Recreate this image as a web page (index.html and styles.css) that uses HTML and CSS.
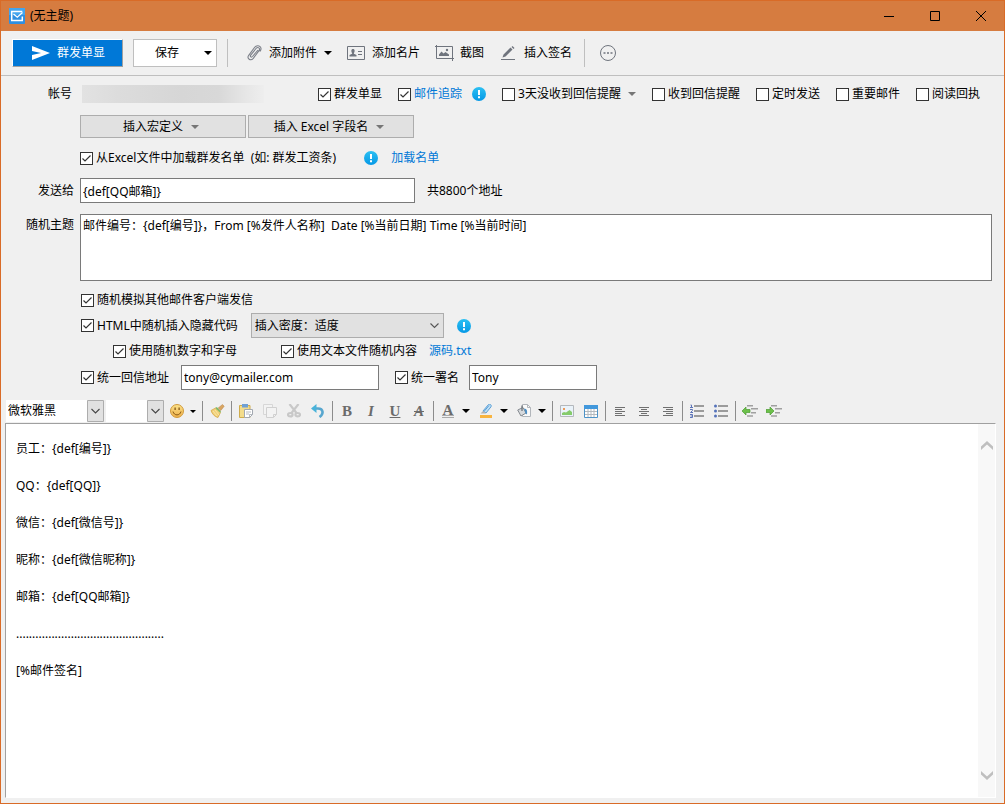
FILE: index.html
```html
<!DOCTYPE html>
<html lang="zh-CN">
<head>
<meta charset="utf-8">
<meta name="viewport" content="width=device-width, initial-scale=1">
<title>(无主题)</title>
<link rel="stylesheet" href="styles.css">
</head>
<body>
<svg class="defs" aria-hidden="true">
  <defs>
    <linearGradient id="info-fill" x1="0" y1="0" x2="0" y2="1"><stop offset="0" stop-color="#2cc0f2"/><stop offset="1" stop-color="#0598e6"/></linearGradient>
    <linearGradient id="smile-fill" x1="0" y1="0" x2="0" y2="1"><stop offset="0" stop-color="#fbe28a"/><stop offset="1" stop-color="#efb04a"/></linearGradient>
    <symbol id="info" viewBox="0 0 14 14"><circle cx="7" cy="7" r="7" fill="url(#info-fill)"/><path d="M6 3h2v5H6zM6 9.200h2v2H6z" fill="#fff"/></symbol>
    <symbol id="caret" viewBox="0 0 8 4"><path d="M0 0h8L4 4z" fill="currentColor"/></symbol>
  </defs>
</svg>
<div class="window">
  <header class="titlebar">
    <svg class="app-icon" width="16" height="16" viewBox="0 0 16 16"><rect width="16" height="16" rx="1" fill="#2f8fe0"/><rect y="0" width="16" height="7" fill="#43a5ee"/><path d="M13.300 8.500v4H2.700v-9h10.600" fill="none" stroke="#fff" stroke-width="1.500"/><path d="M4.500 6l3.800 3.200L13.500 4.500" fill="none" stroke="#fff" stroke-width="1.300"/></svg>
    <h1 class="title">(无主题)</h1>
    <button class="win-btn" aria-label="最小化"><svg width="10" height="10" viewBox="0 0 10 10"><path d="M0 5.500h10" stroke="#000"/></svg></button>
    <button class="win-btn" aria-label="最大化"><svg width="10" height="10" viewBox="0 0 10 10"><path d="M.5.500h9v9h-9z" fill="none" stroke="#000"/></svg></button>
    <button class="win-btn" aria-label="关闭"><svg width="10" height="10" viewBox="0 0 10 10"><path d="M0 0l10 10M10 0L0 10" stroke="#000"/></svg></button>
  </header>

  <nav class="toolbar">
    <button class="send"><svg width="18" height="14" viewBox="0 0 18 14"><path d="M0 0l18 7L0 14V9l9-2-9-2z" fill="#fff"/></svg>群发单显</button>
    <button class="save"><span class="save-text">保存</span><svg class="caret" width="8" height="4"><use href="#caret"/></svg></button>
    <span class="bar-sep"></span>
    <button class="tool attach"><svg width="16" height="18" viewBox="0 0 16 18"><path d="M12 6l-5.500 6.500c-1.200 1.300-2.800 0-1.800-1.400L10 4.500c2-2.200 4.600-.2 3 2.200L7.300 14.300c-2.700 3.200-6.800.3-4.600-3L8.500 3.500c2.500-3.200 7.500-1.500 6.300 2.300-.2.700-.5 1-1 1.700" fill="none" stroke="#7b7f88" stroke-width="1.100"/></svg>添加附件<svg class="caret" width="8" height="4"><use href="#caret"/></svg></button>
    <button class="tool card"><svg width="18" height="14" viewBox="0 0 18 14"><path d="M.5.500h17v13H.5z" fill="none" stroke="#6f747d"/><path d="M6 3c2 0 2 2.500.9 4v.8L9.500 9v1.500h-7V9l2.600-1.200V7C4 5.500 4 3 6 3zM11 5h4v1h-4zM11 8h4v1h-4z" fill="#6f747d"/></svg>添加名片</button>
    <button class="tool shot"><svg width="19" height="16" viewBox="0 0 19 16"><path d="M0 1.500h17.500V16M1.500 0v13.500H19" fill="none" stroke="#6f747d"/><path d="M4 11V9.500l2.500-3 2 2 2-1.500 3.500 2.500V11z" fill="#6f747d"/><circle cx="12" cy="5" r="1.200" fill="#6f747d"/></svg>截图</button>
    <button class="tool sign"><svg width="15" height="15" viewBox="0 0 15 15"><path d="M1.500 11.500l1-3 7-7 2 2-7 7zM10.500 1l1-1 2 2-1 1z" fill="#6f747d"/><path d="M0 13.500h14" stroke="#6f747d"/></svg>插入签名</button>
    <span class="bar-sep"></span>
    <button class="more" aria-label="更多"><svg width="16" height="16" viewBox="0 0 16 16"><circle cx="8" cy="8" r="7.500" fill="none" stroke="#6f747d"/><path d="M3.500 7.200h2v1.600h-2zM7 7.200h2v1.600H7zM10.500 7.200h2v1.600h-2z" fill="#6f747d"/></svg></button>
  </nav>

  <form class="form">
    <div class="row options">
      <span class="label account-label">帐号</span>
      <span class="account"></span>
      <label class="check"><input type="checkbox" checked>群发单显</label>
      <span class="pair"><label class="check blue"><input type="checkbox" checked>邮件追踪</label><svg width="14" height="14"><use href="#info"/></svg></span>
      <span class="remind"><label class="check"><input type="checkbox">3天没收到回信提醒</label><svg class="grey" width="8" height="4"><use href="#caret"/></svg></span>
      <label class="check"><input type="checkbox">收到回信提醒</label>
      <label class="check"><input type="checkbox">定时发送</label>
      <label class="check"><input type="checkbox">重要邮件</label>
      <label class="check"><input type="checkbox">阅读回执</label>
    </div>
    <div class="row macros">
      <span class="label"></span>
      <button type="button" class="grey-btn">插入宏定义<svg class="grey" width="8" height="4"><use href="#caret"/></svg></button>
      <button type="button" class="grey-btn">插入 Excel 字段名<svg class="grey" width="8" height="4"><use href="#caret"/></svg></button>
    </div>
    <div class="row excel">
      <span class="label"></span>
      <label class="check"><input type="checkbox" checked>从Excel文件中加载群发名单&nbsp; (如: 群发工资条)</label>
      <svg class="excel-info" width="14" height="14"><use href="#info"/></svg>
      <a href="#" class="link">加载名单</a>
    </div>
    <div class="row inputs">
      <label class="label" for="to">发送给</label>
      <input class="field to" id="to" type="text" value="{def[QQ邮箱]}">
      <span class="count">共8800个地址</span>
    </div>
    <div class="row subject">
      <label class="label" for="subject">随机主题</label>
      <textarea class="field area" id="subject">邮件编号：{def[编号]}，From [%发件人名称]&nbsp; Date [%当前日期] Time [%当前时间]</textarea>
    </div>
    <div class="row short inset">
      <span class="label"></span>
      <label class="check"><input type="checkbox" checked>随机模拟其他邮件客户端发信</label>
    </div>
    <div class="row density inset">
      <span class="label"></span>
      <label class="check"><input type="checkbox" checked>HTML中随机插入隐藏代码</label>
      <select class="density-select" aria-label="插入密度"><option>插入密度：适度</option></select>
      <svg width="14" height="14"><use href="#info"/></svg>
    </div>
    <div class="row short nested">
      <span class="label"></span>
      <label class="check first"><input type="checkbox" checked>使用随机数字和字母</label>
      <label class="check second"><input type="checkbox" checked>使用文本文件随机内容</label>
      <a href="#" class="link">源码.txt</a>
    </div>
    <div class="row inputs reply inset">
      <span class="label"></span>
      <label class="check"><input type="checkbox" checked>统一回信地址</label>
      <input class="field mail" type="text" value="tony@cymailer.com" aria-label="回信地址">
      <label class="check"><input type="checkbox" checked>统一署名</label>
      <input class="field name" type="text" value="Tony" aria-label="署名">
    </div>
  </form>

  <div class="format">
    <select class="font-select" aria-label="字体"><option>微软雅黑</option></select>
    <select class="font-select size" aria-label="字号"><option></option></select>
    <button class="ed smile" aria-label="表情"><svg width="14" height="14" viewBox="0 0 14 14"><circle cx="7" cy="7" r="6.500" fill="url(#smile-fill)" stroke="#d09a3c"/><path d="M3 7.500c1 4.500 7 4.500 8 0" fill="none" stroke="#8a5a14"/><path d="M4.500 3.500h1.200V6H4.500zM8.500 3.500h1.200V6H8.500z" fill="#7a4e10"/></svg></button>
    <button class="drop tight" aria-label="更多表情"><svg width="6" height="3"><use href="#caret"/></svg></button>
    <i class="sep"></i>
    <button class="ed" aria-label="格式刷"><svg width="15" height="14" viewBox="0 0 15 14"><path d="M1 6.500L5.500 4l5 4.500-2.500 5c-3-.5-6-3.500-7-7z" fill="#f0cf7a" stroke="#d2a33f" stroke-width=".7"/><path d="M3 7l4 5M5 6l4 5" stroke="#fff0b0" stroke-width=".7"/><path d="M5.300 4l1.500-1L11 7.200l-.8 1.500z" fill="#7dbb6a"/><path d="M8.200 4L12.500.5l1.700 1.700L10.800 6.500z" fill="#d9a662" stroke="#b98348" stroke-width=".5"/></svg></button>
    <i class="sep"></i>
    <button class="ed" aria-label="粘贴"><svg width="14" height="14" viewBox="0 0 14 14"><path d="M.5 1.500h10.500v12H.5z" fill="#f3dc8b" stroke="#cfac4c"/><path d="M3 0h6v3.500H3z" fill="#6f9fd4"/><path d="M5.500 5.500h8v5l-3 3h-5z" fill="#fff" stroke="#a2a8b0"/><path d="M7 8h5M7 10h3M10.500 13.500v-3h3" fill="none" stroke="#a2a8b0" stroke-width=".8"/></svg></button>
    <button class="ed" aria-label="复制"><svg width="14" height="14" viewBox="0 0 14 14"><path d="M.5.500h9v10h-9z" fill="#f3f3f3" stroke="#d7d7d7"/><path d="M3.500 3.500h10v7l-3 3h-7z" fill="#f3f3f3" stroke="#d0d0d0"/><path d="M10.500 13.500v-3h3" fill="none" stroke="#d0d0d0"/></svg></button>
    <button class="ed" aria-label="剪切"><svg width="14" height="14" viewBox="0 0 14 14" fill="none" stroke="#c8c8c8" stroke-width="2.200"><path d="M2.500 0l7 9M11.500 0l-7 9"/><ellipse cx="3.300" cy="10.700" rx="2.300" ry="1.700"/><ellipse cx="10.700" cy="10.700" rx="2.300" ry="1.700"/></svg></button>
    <button class="ed" aria-label="撤销"><svg width="14" height="14" viewBox="0 0 14 14"><path d="M3 4.500h4c5.500 0 6 5.500 1.500 8.500" fill="none" stroke="#58a7cf" stroke-width="2.600"/><path d="M0 4.500L5.500 0v9z" fill="#49b3da"/></svg></button>
    <i class="sep"></i>
    <button class="ed glyph" aria-label="粗体"><b>B</b></button>
    <button class="ed glyph" aria-label="斜体"><em>I</em></button>
    <button class="ed glyph" aria-label="下划线"><u>U</u></button>
    <button class="ed glyph" aria-label="删除线"><s><em>A</em></s></button>
    <i class="sep"></i>
    <button class="ed glyph color" aria-label="字体颜色"><span class="swatch">A</span></button>
    <button class="drop" aria-label="选择字体颜色"><svg width="8" height="4"><use href="#caret"/></svg></button>
    <button class="ed" aria-label="突出显示"><svg width="14" height="14" viewBox="0 0 14 14"><path d="M1 11h12v3H1z" fill="#f8b440"/><path d="M4 7l5.500-6.500c1.500-1 3.500.8 2.500 2.300L7 9z" fill="#bfe0f6" stroke="#5a9fd6"/><path d="M5 7.500l5-6" stroke="#5a9fd6"/><path d="M4 7L1.500 9.500H6L7 9z" fill="#b4b4b4"/></svg></button>
    <button class="drop" aria-label="选择突出显示"><svg width="8" height="4"><use href="#caret"/></svg></button>
    <button class="ed" aria-label="背景颜色"><svg width="14" height="14" viewBox="0 0 14 14"><path d="M5.500.5h5l3 3v9h-8z" fill="#fafafa" stroke="#b2b6bb"/><path d="M10.500.5v3h3" fill="none" stroke="#b2b6bb"/><path d="M.7 6L6 3.500 9 9l-5 3z" fill="#d7dadd" stroke="#84898f"/><path d="M5 7V1.500" stroke="#666d75" stroke-width="1.200"/><path d="M7 4.500c3 .3 3.500 2 3 6-1-1-2-1-2-3z" fill="#4d8fc4"/></svg></button>
    <button class="drop" aria-label="选择背景颜色"><svg width="8" height="4"><use href="#caret"/></svg></button>
    <i class="sep"></i>
    <button class="ed" aria-label="图片"><svg width="14" height="12" viewBox="0 0 14 12"><path d="M.5.500h13v11H.5z" fill="#eaf3fa" stroke="#b4b8bc"/><path d="M2 10V8l2-1 2 .5L9.500 5l2.500 2v3z" fill="#85cb6c"/><path d="M3 3h2v2H3z" fill="#ee9a5a"/></svg></button>
    <button class="ed" aria-label="表格"><svg width="14" height="13" viewBox="0 0 14 13"><path d="M.5.500h13v12H.5z" fill="#fff" stroke="#4d93c8"/><path d="M0 0h14v4H0z" fill="#4298dc"/><path d="M1 6.500h12M1 9.500h12M4 4v8M7 4v8M10 4v8" stroke="#b4b9be"/></svg></button>
    <i class="sep"></i>
    <button class="ed" aria-label="左对齐"><svg width="10" height="9" viewBox="0 0 10 9"><path d="M0 .5h10M0 2.500h7M0 4.500h10M0 6.500h7M0 8.500h10" stroke="#707070"/></svg></button>
    <button class="ed" aria-label="居中"><svg width="10" height="9" viewBox="0 0 10 9"><path d="M0 .5h10M2 2.500h6M0 4.500h10M2 6.500h6M0 8.500h10" stroke="#707070"/></svg></button>
    <button class="ed" aria-label="右对齐"><svg width="10" height="9" viewBox="0 0 10 9"><path d="M0 .5h10M3 2.500h7M0 4.500h10M3 6.500h7M0 8.500h10" stroke="#707070"/></svg></button>
    <i class="sep"></i>
    <button class="ed" aria-label="编号列表"><svg width="14" height="14" viewBox="0 0 14 14"><path d="M4 2h10M4 7h10M4 12h10" stroke="#9b9b9b" stroke-width="2"/><path d="M.5 1h1v3M0 3.500h3M0 5.500h2.500v1L.5 8.500H3M0 10.500h2.500v3H0M.5 12h2" fill="none" stroke="#5d74b8"/></svg></button>
    <button class="ed" aria-label="项目列表"><svg width="14" height="14" viewBox="0 0 14 14"><path d="M4 2h10M4 7h10M4 12h10" stroke="#9b9b9b" stroke-width="2"/><g fill="#5573ba"><circle cx="1.500" cy="2" r="1.500"/><circle cx="1.500" cy="7" r="1.500"/><circle cx="1.500" cy="12" r="1.500"/></g></svg></button>
    <i class="sep"></i>
    <button class="ed" aria-label="减少缩进"><svg width="16" height="12" viewBox="0 0 16 12"><path d="M5 .8h6M9 3.800h7M9 7.800h5M5 11h6" stroke="#a0a0a0" stroke-width="1.600"/><path d="M0 6l4-4v2.500h4v3H4V10z" fill="#6cc04a" stroke="#4d9c34" stroke-width=".7"/></svg></button>
    <button class="ed" aria-label="增加缩进"><svg width="16" height="12" viewBox="0 0 16 12"><path d="M5 .8h6M9 3.800h7M9 7.800h5M5 11h6" stroke="#a0a0a0" stroke-width="1.600"/><path d="M8 6L4 2v2.500H0v3h4V10z" fill="#6cc04a" stroke="#4d9c34" stroke-width=".7"/></svg></button>
  </div>

  <main class="editor">
    <div class="body" contenteditable="true" role="textbox" aria-multiline="true" aria-label="正文">
      <p>员工：{def[编号]}</p>
      <p>QQ：{def[QQ]}</p>
      <p>微信：{def[微信号]}</p>
      <p>昵称：{def[微信昵称]}</p>
      <p>邮箱：{def[QQ邮箱]}</p>
      <p class="rule">..............................................</p>
      <p>[%邮件签名]</p>
    </div>
    <div class="scroll">
      <button aria-label="向上滚动"><svg width="12" height="9" viewBox="0 0 12 9"><path d="M0 5.500L6 0l6 5.500V9L6 3.500 0 9z" fill="#bfbfbf"/></svg></button>
      <button aria-label="向下滚动"><svg width="12" height="9" viewBox="0 0 12 9"><path d="M0 3.500L6 9l6-5.500V0L6 5.500 0 0z" fill="#bfbfbf"/></svg></button>
    </div>
  </main>
</div>
</body>
</html>
```
FILE: styles.css
```css
* { box-sizing: border-box; }

body {
  margin: 0;
  background: #f0f0f0;
  color: #000;
  font: 12px/16px "Noto Sans", "Noto Sans CJK SC", sans-serif;
}

button, input, select, textarea { font: inherit; color: inherit; margin: 0; border-radius: 0; }
button { padding: 0; border: 0; background: none; white-space: nowrap; }
svg { flex: none; display: block; }
.defs { position: absolute; width: 0; height: 0; }

.window {
  display: flex;
  flex-direction: column;
  min-height: 100vh;
  border: 1px solid #d96b27;
}

/* Title bar */
.titlebar { display: flex; align-items: center; height: 30px; padding-left: 8px; background: #d67c40; }
.title { flex: 1; margin: 0 0 0 5px; font-size: 12px; font-weight: 400; }
.win-btn { display: grid; place-items: center; width: 46px; height: 28px; }

/* Main toolbar */
.toolbar {
  display: flex;
  align-items: center;
  height: 45px;
  padding-left: 11px;
  border-bottom: 1px solid #bfbfbf;
}
.send {
  display: flex;
  align-items: center;
  justify-content: center;
  gap: 7px;
  width: 111px;
  height: 28px;
  padding-left: 2px;
  background: #0078d7;
  border: 1px solid #fff;
  border-right-color: #a0a0a0;
  border-bottom-color: #a0a0a0;
  color: #fff;
}
.save {
  display: flex;
  align-items: center;
  width: 84px;
  height: 28px;
  margin: 0 10px;
  padding-right: 4px;
  background: #fff;
  border: 1px solid #bfbfbf;
}
.save-text { flex: 1; padding-right: 4px; }
.bar-sep { width: 1px; height: 28px; background: #bfbfbf; }
.tool { display: flex; align-items: center; gap: 8px; }
.attach { margin-left: 18px; gap: 7px; }
.card { margin-left: 15px; gap: 7px; }
.shot { margin-left: 15px; gap: 6px; }
.sign { margin: 0 12px 0 17px; }
.more { margin-left: 15px; }

/* Form */
.row { display: flex; align-items: center; padding-right: 12px; white-space: nowrap; }
.label { flex: none; width: 79px; padding-right: 6px; text-align: right; }
.check { display: flex; align-items: center; gap: 3px; }
.check input {
  appearance: none;
  flex: none;
  width: 13px;
  height: 13px;
  background: #fff;
  border: 1px solid #333;
}
.check input:checked {
  background: #fff url("data:image/svg+xml,%3Csvg xmlns='http://www.w3.org/2000/svg' viewBox='0 0 11 11'%3E%3Cpath d='M1.500 5.500l2.500 2.500 5.500-5.500' fill='none' stroke='%23333' stroke-width='1.200'/%3E%3C/svg%3E");
}
.blue, .link { color: #0078d7; }
.link { text-decoration: none; }
.grey { color: #767676; }

.options { height: 36px; gap: 16px; padding-right: 24px; }
.account-label { width: 71px; padding-right: 0; margin-right: -6px; }
.account {
  flex: 1;
  max-width: 182px;
  height: 18px;
  margin-right: auto;
  background: linear-gradient(90deg, #e2e2e2, #dcdcdc 20%, #d6d6d6 55%, #d8d8d8 75%, #e6e6e6 90%, #eee);
}
.pair { display: flex; align-items: center; gap: 10px; }
.remind { display: flex; align-items: center; gap: 7px; }

.macros { height: 29px; }
.grey-btn {
  display: flex;
  align-items: center;
  justify-content: center;
  gap: 8px;
  width: 166px;
  height: 23px;
  margin-right: 2px;
  padding-right: 4px;
  background: #e1e1e1;
  border: 1px solid #adadad;
}

.excel { height: 34px; gap: 13px; }
.excel .label { margin-right: -13px; }
.excel-info { margin-left: 15px; }

.inputs { height: 31px; }
.field { height: 25px; padding: 0 2px; background: #fff; border: 1px solid #7a7a7a; }
.to { width: 335px; margin-right: 12px; }
.subject { align-items: flex-start; padding-top: 8px; padding-bottom: 8px; }
.subject .label { padding-top: 3px; }
.area { flex: 1; min-width: 0; height: 67px; padding: 3px 2px; resize: none; }

.inset .label { width: 80px; }
.short { height: 22px; }
.density { height: 29px; gap: 13px; }
.density .label { margin-right: -13px; }
.density-select {
  appearance: none;
  width: 193px;
  height: 25px;
  padding: 0 24px 0 3px;
  border: 1px solid #adadad;
  background: #e1e1e1 url("data:image/svg+xml,%3Csvg xmlns='http://www.w3.org/2000/svg' viewBox='0 0 9 6'%3E%3Cpath d='M.5 .5l4 4 4-4' fill='none' stroke='%23555' stroke-width='1.100'/%3E%3C/svg%3E") right 4px center / 9px 6px no-repeat;
}
.first { margin-left: 33px; }
.second { margin: 0 12px 0 44px; }
.mail { width: 198px; margin: 0 16px 0 12px; }
.name { width: 128px; margin-left: 10px; }

/* Formatting bar */
.format { display: flex; align-items: center; height: 30px; padding: 6px 0 0 5px; }
.font-select {
  appearance: none;
  width: 98px;
  height: 22px;
  margin-right: 2px;
  padding: 0 19px 0 2px;
  border: 0;
  background:
    url("data:image/svg+xml,%3Csvg xmlns='http://www.w3.org/2000/svg' viewBox='0 0 17 22'%3E%3Cpath d='M.5 .5h16v21H.5z' fill='%23e1e1e1' stroke='%23adadad'/%3E%3Cpath d='M4.500 9l4 4 4-4' fill='none' stroke='%23444' stroke-width='1.100'/%3E%3C/svg%3E") right center / 17px 22px no-repeat,
    #fff;
}
.size { width: 58px; margin-right: 0; }
.ed { display: grid; place-items: center; flex: none; width: 24px; height: 22px; }
.smile { width: 26px; }
.drop { display: grid; place-items: center; flex: none; width: 14px; height: 22px; padding-right: 2px; }
.tight { width: 10px; padding-right: 4px; }
.sep { flex: none; width: 1px; height: 20px; margin: 0 2px; background: #8c8c8c; }
.glyph { color: #6b6b6b; font: bold 15px/16px "Liberation Serif", serif; }
.swatch { width: 12px; height: 14px; line-height: 12px; border-bottom: 3px double #aaa; }

/* Message body */
.editor {
  flex: 1;
  display: flex;
  margin: 0 8px 5px 4px;
  border: 1px solid #fff;
  border-top-color: #a0a0a0;
  border-left-color: #a0a0a0;
  background: #fff;
}
.body { flex: 1; padding: 17px 10px; outline: 0; }
.body p { margin: 0 0 21px; }
.scroll {
  display: flex;
  flex-direction: column;
  justify-content: space-between;
  align-items: center;
  width: 17px;
  padding: 17px 0;
  background: #f8f8f8;
}
```
